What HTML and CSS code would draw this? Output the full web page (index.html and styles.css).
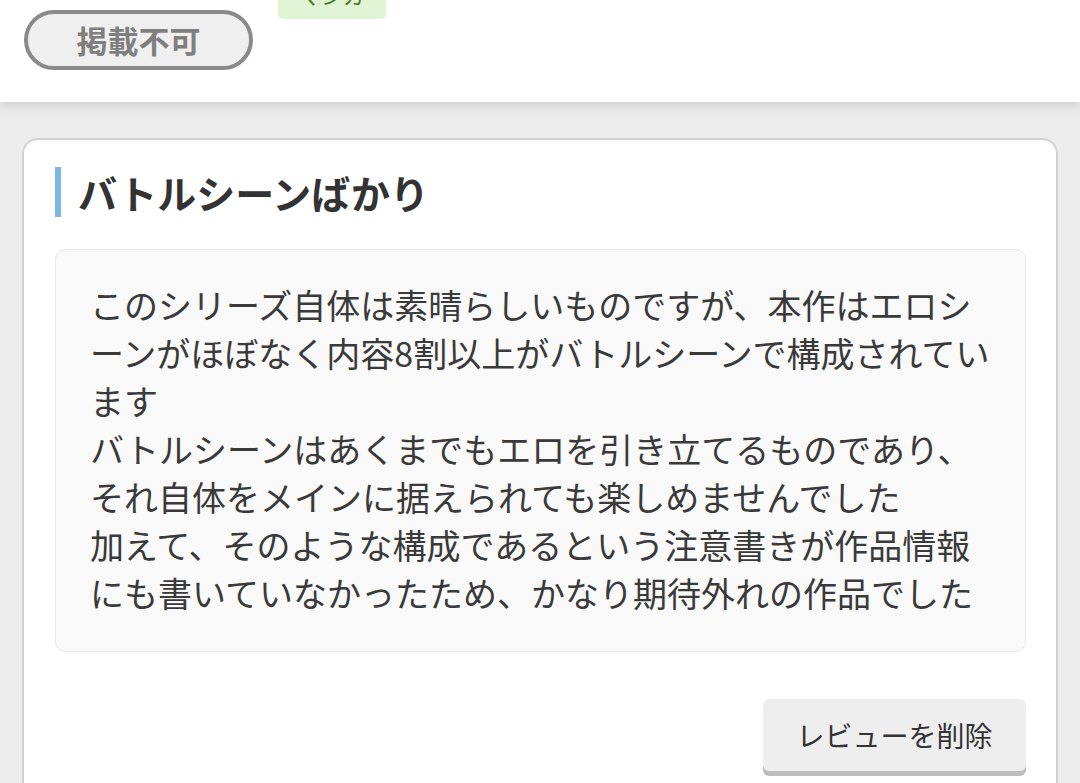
FILE: index.html
```html
<!DOCTYPE html>
<html lang="ja">
<head>
<meta charset="utf-8">
<link rel="stylesheet" href="styles.css">
</head>
<body>
<header class="top">
  <div class="pill">掲載不可</div>
  <div class="tag">マンガ</div>
</header>
<main class="card">
  <h2 class="title">バトルシーンばかり</h2>
  <div class="body">このシリーズ自体は素晴らしいものですが、本作はエロシーンがほぼなく内容8割以上がバトルシーンで構成されています<br>バトルシーンはあくまでもエロを引き立てるものであり、<br>それ自体をメインに据えられても楽しめませんでした<br>加えて、そのような構成であるという注意書きが作品情報にも書いていなかったため、かなり期待外れの作品でした</div>
  <div class="actions"><button class="delete">レビューを削除</button></div>
</main>
</body>
</html>
```

FILE: styles.css
```css
* { box-sizing: border-box; }
html, body { margin: 0; padding: 0; }
body {
  background: #ececec;
  font-family: "Noto Sans CJK JP", "Noto Sans", sans-serif;
  color: #333;
  overflow: hidden;
}
.top {
  position: relative;
  z-index: 1;
  height: 102px;
  background: #fff;
  display: flex;
  align-items: flex-start;
  gap: 25px;
  padding-left: 24px;
  box-shadow: 0 3px 10px rgba(0,0,0,0.14);
}
.pill {
  margin-top: 10px;
  width: 229px;
  height: 60px;
  border: 4px solid #8a8a8a;
  border-radius: 30px;
  background: #efefef;
  color: #7f7f7f;
  font-weight: 700;
  font-size: 31px;
  line-height: 52px;
  text-align: center;
}
.tag {
  margin-top: -21px;
  width: 108px;
  height: 40px;
  border-radius: 5px;
  background: #e1f5d4;
  color: #4a7a2c;
  font-size: 22px;
  line-height: 30px;
  text-align: center;
}
.card {
  margin: 36px 22px 0;
  background: #fff;
  border: 2px solid #d2d2d2;
  border-radius: 16px;
  padding: 27px 30px 60px 31px;
  min-height: 700px;
}
.title {
  margin: 0;
  border-left: 6px solid #7ab8e3;
  padding-left: 17px;
  font-size: 39px;
  line-height: 50px;
  font-weight: 700;
  color: #333;
}
.body {
  margin-top: 32px;
  background: #f9f9f9;
  border: 1px solid #e9e9e9;
  border-radius: 10px;
  padding: 31px 34px 34px 34px;
  font-size: 34px;
  line-height: 48px;
  color: #3a3a3a;
}
.actions {
  display: flex;
  justify-content: flex-end;
  margin-top: 47px;
}
.delete {
  width: 263px;
  height: 72px;
  border: none;
  border-radius: 6px;
  background: #eeeeee;
  box-shadow: 0 5px 0 #bdbdbd;
  font-family: "Noto Sans CJK JP", "Noto Sans", sans-serif;
  font-size: 28px;
  color: #333;
  padding: 0;
}
```
